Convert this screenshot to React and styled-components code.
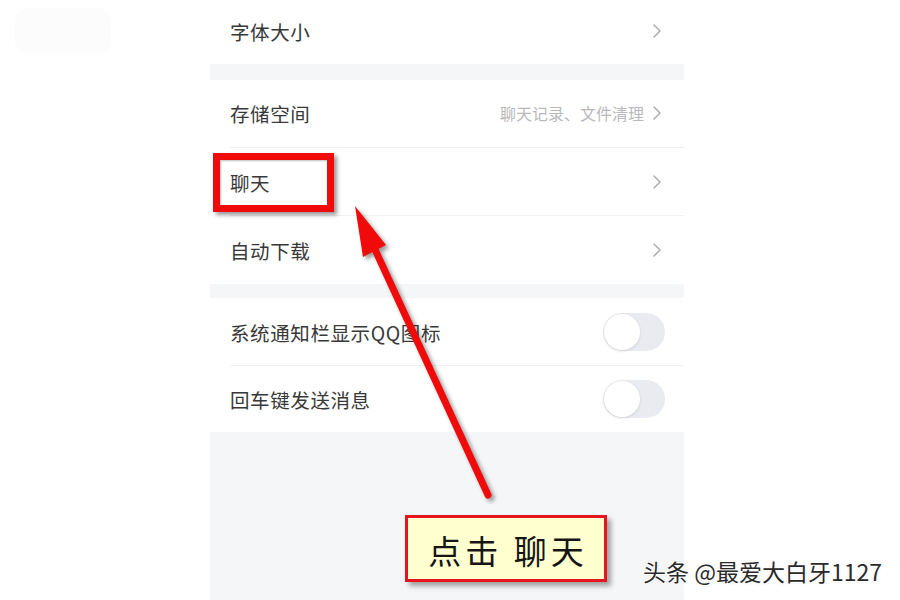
import React from "react";
import styled, { createGlobalStyle } from "styled-components";

const Global = createGlobalStyle`
  html, body { margin: 0; padding: 0; background: #ffffff; }
  body { font-family: "Noto Sans CJK SC", "Noto Sans", sans-serif; }
`;

const Page = styled.div`
  position: relative;
  width: 900px;
  height: 600px;
  overflow: hidden;
  display: grid;
  grid-template-columns: 210px 474px 1fr;
  background: #ffffff;
`;

const Side = styled.div`
  position: relative;
`;

const Smudge = styled.div`
  position: absolute;
  left: 15px;
  top: 8px;
  width: 96px;
  height: 46px;
  border-radius: 14px;
  background: #fcfcfc;
`;

const Phone = styled.div`
  display: flex;
  flex-direction: column;
  background: #f5f6f8;
  height: 600px;
`;

const Group = styled.div`
  display: flex;
  flex-direction: column;
  background: #ffffff;
  margin-bottom: ${(p) => p.$gap || 0}px;
`;

const Row = styled.div`
  position: relative;
  height: ${(p) => p.$h || 68}px;
  display: flex;
  align-items: center;
  padding: 0 20px;
  box-sizing: border-box;
  padding-bottom: ${(p) => p.$lift || 0}px;
  ${(p) =>
    p.$divider &&
    `&::after {
      content: "";
      position: absolute;
      left: 20px;
      right: 0;
      bottom: 0;
      height: 1px;
      background: #f0f1f3;
    }`}
`;

const Label = styled.span`
  flex: 1;
  font-size: 19.5px;
  color: #383838;
  letter-spacing: 0.6px;
`;

const Sub = styled.span`
  font-size: 16px;
  color: #b9b9bc;
  margin-right: 8px;
`;

const Chevron = () => (
  <svg width="10" height="16" viewBox="0 0 10 16" style={{ marginRight: 2 }}>
    <path d="M2 2 L8 8 L2 14" fill="none" stroke="#b0b0b4" strokeWidth="1.6" strokeLinecap="round" strokeLinejoin="round" />
  </svg>
);

const Toggle = styled.div`
  width: 62px;
  height: 38px;
  border-radius: 19px;
  background: #e9ebf1;
  position: relative;
  margin-right: -1px;
  &::before {
    content: "";
    position: absolute;
    left: 1px;
    top: 1px;
    width: 36px;
    height: 36px;
    border-radius: 50%;
    background: #ffffff;
    box-shadow: 0 1px 3px rgba(0, 0, 0, 0.12);
  }
`;

const HighlightBox = styled.div`
  position: absolute;
  left: 213px;
  top: 153px;
  width: 121px;
  height: 59px;
  box-sizing: border-box;
  border: 7px solid #f00a0a;
  box-shadow: 3px 3px 4px rgba(0, 0, 0, 0.4), inset 1px 1px 2px rgba(0, 0, 0, 0.25);
  pointer-events: none;
`;

const ArrowLayer = styled.svg`
  position: absolute;
  left: 0;
  top: 0;
  width: 900px;
  height: 600px;
  pointer-events: none;
  filter: drop-shadow(3px 3px 2px rgba(0, 0, 0, 0.4));
`;

const Callout = styled.div`
  position: absolute;
  left: 405px;
  top: 515px;
  width: 202px;
  height: 67px;
  box-sizing: border-box;
  border: 3px solid #e4161b;
  background: #ffffcf;
  box-shadow: 4px 4px 5px rgba(0, 0, 0, 0.35);
  display: flex;
  align-items: center;
  justify-content: center;
  font-family: "Noto Sans CJK SC", sans-serif;
  font-size: 33px;
  color: #151515;
  letter-spacing: 4px;
  padding: 2px 0 0 4px;
`;

const Watermark = styled.div`
  position: absolute;
  left: 643px;
  top: 554px;
  font-family: "Noto Sans CJK SC", sans-serif;
  font-size: 23px;
  color: #2a2a2a;
  white-space: nowrap;
  text-shadow: 1px 1px 0 #fff, -1px -1px 0 #fff, 1px -1px 0 #fff, -1px 1px 0 #fff, 0 0 3px rgba(0,0,0,0.2);
`;

export default function App() {
  return (
    <>
      <Global />
      <Page>
        <Side>
          <Smudge />
        </Side>
        <Phone>
          <Group $gap={16}>
            <Row $h={64} $lift={2}>
              <Label>字体大小</Label>
              <Chevron />
            </Row>
          </Group>
          <Group $gap={14}>
            <Row $divider $lift={2}>
              <Label>存储空间</Label>
              <Sub>聊天记录、文件清理</Sub>
              <Chevron />
            </Row>
            <Row $divider>
              <Label>聊天</Label>
              <Chevron />
            </Row>
            <Row>
              <Label>自动下载</Label>
              <Chevron />
            </Row>
          </Group>
          <Group>
            <Row $divider>
              <Label>系统通知栏显示QQ图标</Label>
              <Toggle />
            </Row>
            <Row $h={66}>
              <Label>回车键发送消息</Label>
              <Toggle />
            </Row>
          </Group>
        </Phone>
        <Side />
        <HighlightBox />
        <ArrowLayer viewBox="0 0 900 600">
          <line x1="488" y1="495" x2="372" y2="243" stroke="#f00a0a" strokeWidth="7" strokeLinecap="round" />
          <polygon points="355,206 386,245 363,257" fill="#f00a0a" />
        </ArrowLayer>
        <Callout>点击 聊天</Callout>
        <Watermark>头条 @最爱大白牙1127</Watermark>
      </Page>
    </>
  );
}
